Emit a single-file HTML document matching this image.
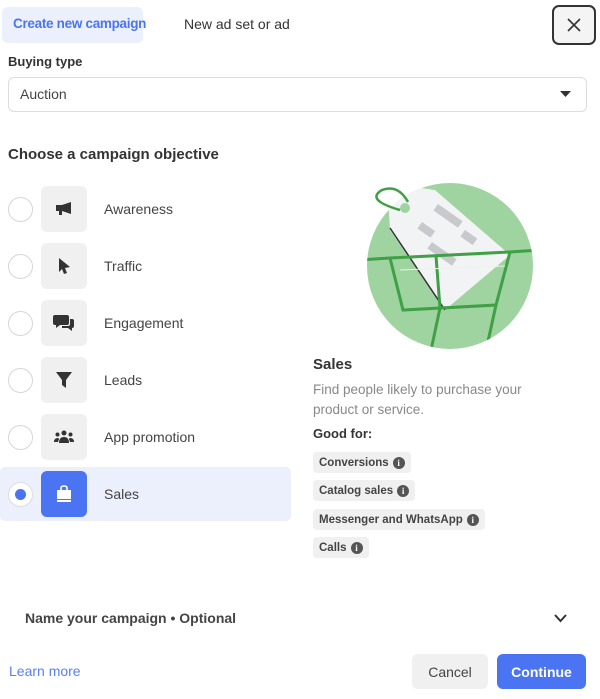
<!DOCTYPE html>
<html><head><style>
*{margin:0;padding:0;box-sizing:border-box}
body{width:600px;height:699px;background:#fff;font-family:"Liberation Sans",Arial,sans-serif;position:relative;overflow:hidden;color:#1c1e21}
.a{position:absolute}
.radio{position:absolute;left:8px;width:25px;height:25px;border:1px solid #d6d6d6;border-radius:50%;background:#fff}
.ib{position:absolute;left:41px;width:46px;height:46px;border-radius:6px;background:#f0f0f0;display:flex;align-items:center;justify-content:center}
.lbl{position:absolute;left:104px;font-size:14px;color:#444}
.chip{position:absolute;left:313px;height:21px;background:#f0f0f0;border-radius:4px;font-size:11.5px;font-weight:bold;color:#444;padding:3px 6px;display:flex;align-items:center;gap:4px}
.i{width:12px;height:12px;border-radius:50%;background:#555;color:#fff;font-size:9px;display:inline-flex;align-items:center;justify-content:center;font-family:"Liberation Serif",serif}
</style></head><body>
<div class="a" style="left:2px;top:7px;width:141px;height:36px;background:#ebf0fc;border-radius:6px"></div>
<div class="a" style="left:13px;top:16px;font-size:13.5px;letter-spacing:-0.3px;font-weight:bold;color:#4b74f2">Create new campaign</div>
<div class="a" style="left:184px;top:16px;font-size:14px;color:#333">New ad set or ad</div>
<div class="a" style="left:552px;top:5px;width:44px;height:40px;border:2px solid #333;border-radius:7px;background:#f4f4f4"></div>
<svg class="a" style="left:566px;top:17px" width="16" height="16"><path d="M2 2L14 14M14 2L2 14" stroke="#333" stroke-width="1.6"/></svg>
<div class="a" style="left:8px;top:54px;font-size:13px;font-weight:bold;color:#333">Buying type</div>
<div class="a" style="left:8px;top:77px;width:579px;height:35px;border:1px solid #ddd;border-radius:6px"></div>
<div class="a" style="left:20px;top:86px;font-size:14px;color:#444">Auction</div>
<svg class="a" style="left:560px;top:91px" width="11" height="7"><path d="M0 0H11L5.5 6Z" fill="#333"/></svg>
<div class="a" style="left:8px;top:146px;font-size:15px;font-weight:bold;color:#333">Choose a campaign objective</div>

<div class="a" style="left:0;top:467px;width:291px;height:54px;background:#ebf0fc;border-radius:5px"></div>

<div class="radio" style="top:197px"></div><div class="ib" style="top:186px"><svg width="20" height="16"><path d="M2 4H8L17 1V13L8 10H2Z M5 10H8V14H5Z" fill="#333"/></svg></div><div class="lbl" style="top:201px">Awareness</div>
<div class="radio" style="top:254px"></div><div class="ib" style="top:243px"><svg width="14" height="18"><path d="M2 1L13 10L8 11L10 16L7 17L5 12L2 15Z" fill="#333"/></svg></div><div class="lbl" style="top:258px">Traffic</div>
<div class="radio" style="top:311px"></div><div class="ib" style="top:300px"><svg width="22" height="20"><path d="M2 2H14Q16 2 16 4V10Q16 12 14 12H7L3 15V12H2Q0 12 0 10V4Q0 2 2 2Z" fill="#333"/><path d="M17 6H19Q21 6 21 8V13Q21 15 19 15V18L15 15H9V13H15Q17 13 17 11Z" fill="#333"/></svg></div><div class="lbl" style="top:315px">Engagement</div>
<div class="radio" style="top:368px"></div><div class="ib" style="top:357px"><svg width="18" height="18"><path d="M1 1H17L11 9V17L7 14V9Z" fill="#333"/></svg></div><div class="lbl" style="top:372px">Leads</div>
<div class="radio" style="top:425px"></div><div class="ib" style="top:414px"><svg width="22" height="14"><circle cx="11" cy="3" r="2.5" fill="#333"/><circle cx="4.5" cy="4.5" r="2" fill="#333"/><circle cx="17.5" cy="4.5" r="2" fill="#333"/><path d="M6 13Q6 7 11 7Q16 7 16 13Z M1 12Q1 8 5 8Q6 8 6 9L5 12Z M21 12Q21 8 17 8Q16 8 16 9L17 12Z" fill="#333"/></svg></div><div class="lbl" style="top:429px">App promotion</div>
<div class="radio" style="top:482px;border-color:#ddd"><div style="position:absolute;left:6px;top:6px;width:11px;height:11px;border-radius:50%;background:#4b74f2"></div></div>
<div class="ib" style="top:471px;background:#4b74f2"><svg width="18" height="18"><path d="M6 5V3Q6 1 9 1Q12 1 12 3V5" stroke="#fff" stroke-width="1.6" fill="none"/><rect x="2" y="5" width="14" height="9" fill="#fff"/><rect x="2" y="15" width="14" height="2" fill="#fff"/></svg></div>
<div class="lbl" style="top:486px">Sales</div>

<svg class="a" style="left:360px;top:180px" width="180" height="175">
<defs><clipPath id="c"><circle cx="90" cy="86" r="83"/></clipPath></defs>
<circle cx="90" cy="86" r="83" fill="#9fd3a0"/>
<g clip-path="url(#c)">
<path d="M28 18L40 5L75 10L150 75L85 130L30 50Z" fill="#f2f3f5"/>
<path d="M30 48L85 130" stroke="#333" stroke-width="1.5"/>
<rect x="62" y="42" width="16" height="8" fill="#c8c9cc" transform="rotate(35 62 42)"/>
<rect x="78" y="24" width="30" height="8" fill="#c8c9cc" transform="rotate(35 78 24)"/>
<rect x="72" y="62" width="30" height="8" fill="#c8c9cc" transform="rotate(35 72 62)"/>
<rect x="105" y="50" width="15" height="8" fill="#c8c9cc" transform="rotate(35 105 50)"/>
<path d="M30 78L150 72L136 125L43 130Z" fill="none" stroke="#3fa046" stroke-width="3"/>
<path d="M76 76L80 128L70 175M136 125L125 175M150 72L180 70M30 78L0 80" stroke="#3fa046" stroke-width="3" fill="none"/>
<path d="M40 90L145 86" stroke="#e8f4e8" stroke-width="1"/>
</g>
<path d="M40 30Q5 20 22 10Q38 4 48 22" stroke="#3fa046" stroke-width="2.5" fill="none"/>
<circle cx="45" cy="28" r="5" fill="#9fd3a0"/>
</svg>

<div class="a" style="left:313px;top:356px;font-size:15px;font-weight:bold;color:#333">Sales</div>
<div class="a" style="left:313px;top:380px;font-size:13.5px;line-height:20px;color:#888;width:240px">Find people likely to purchase your product or service.</div>
<div class="a" style="left:313px;top:426px;font-size:13px;font-weight:bold;color:#333">Good for:</div>
<div class="chip" style="top:452px">Conversions <span class="i">i</span></div>
<div class="chip" style="top:480px">Catalog sales <span class="i">i</span></div>
<div class="chip" style="top:509px">Messenger and WhatsApp <span class="i">i</span></div>
<div class="chip" style="top:537px">Calls <span class="i">i</span></div>

<div class="a" style="left:25px;top:610px;font-size:14px;font-weight:bold;color:#444">Name your campaign • Optional</div>
<svg class="a" style="left:554px;top:614px" width="13" height="9"><path d="M1 1L6.5 7L12 1" stroke="#333" stroke-width="2" fill="none"/></svg>
<div class="a" style="left:9px;top:663px;font-size:14px;color:#5a7ff0">Learn more</div>
<div class="a" style="left:412px;top:654px;width:76px;height:35px;background:#f0f0f0;border-radius:6px;font-size:14px;color:#444;display:flex;align-items:center;justify-content:center">Cancel</div>
<div class="a" style="left:497px;top:654px;width:89px;height:35px;background:#4b74f2;border-radius:6px;font-size:14px;font-weight:bold;color:#fff;display:flex;align-items:center;justify-content:center">Continue</div>
</body></html>
